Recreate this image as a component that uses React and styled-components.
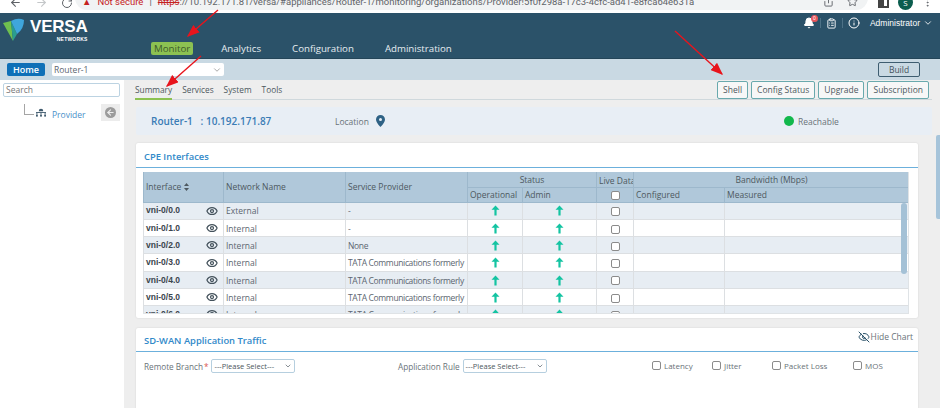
import styled, { createGlobalStyle } from "styled-components";
import { ChevronDown, Info, Bell, ClipboardList, Eye, EyeOff, ArrowLeft, ArrowRight, RotateCw, Star, Share, MoreVertical } from "lucide-react";

const GlobalStyle = createGlobalStyle`
  html, body {
    margin: 0;
    padding: 0;
    background: #ffffff;
  }
  * {
    box-sizing: border-box;
  }
`;

const Page = styled.div`
  position: relative;
  width: 940px;
  height: 408px;
  overflow: hidden;
  font-family: "Open Sans", "Liberation Sans", sans-serif;
  font-size: 9px;
  color: #5c6670;
  display: flex;
  flex-direction: column;
`;

/* browser chrome, cut off at the top of the shot */
const BrowserBar = styled.div`
  height: 13px;
  flex: none;
  display: flex;
  align-items: flex-start;
  background: #ffffff;
  overflow: hidden;
  color: #5f6368;
`;

const NavIcons = styled.div`
  width: 75px;
  flex: none;
  display: flex;
  gap: 13px;
  padding: 0 0 0 9px;
  margin-top: -4px;
  align-items: center;
  svg:nth-child(2) {
    color: #c4c7c9;
  }
`;

const UrlBar = styled.div`
  width: 793px;
  height: 24px;
  flex: none;
  margin-top: -14px;
  padding: 6px 10px 0 7px;
  border-radius: 0 0 12px 12px;
  background: #f1f3f4;
  display: flex;
  align-items: center;
  gap: 6px;
  font-family: Roboto, "Open Sans", sans-serif;
  font-size: 9.5px;
  white-space: nowrap;
`;

const Warn = styled.span`
  color: #c5221f;
`;

const Https = styled.span`
  color: #c5221f;
  text-decoration: line-through;
`;

const UrlActions = styled.div`
  margin-left: auto;
  display: flex;
  gap: 13px;
  align-items: center;
`;

const BrowserRight = styled.div`
  flex: 1;
  display: flex;
  align-items: center;
  gap: 9px;
  padding: 0 0 0 10px;
  margin-top: -5px;
  height: 15px;
`;

const Extension = styled.span`
  width: 11px;
  height: 11px;
  border: 2px solid #444;
  border-left-width: 6px;
`;

const Avatar = styled.span`
  width: 15px;
  height: 15px;
  border-radius: 50%;
  background: #0b5d4e;
  color: #fff;
  font-size: 8px;
  display: flex;
  align-items: center;
  justify-content: center;
`;

const Header = styled.header`
  height: 46px;
  flex: none;
  background: #2b5269;
  border-bottom: 1px solid #244558;
  display: flex;
  color: #ffffff;
`;

const Brand = styled.div`
  width: 151px;
  flex: none;
  display: flex;
  padding: 5px 0 0 3px;
  gap: 6px;
`;

const BrandText = styled.div`
  display: flex;
  flex-direction: column;
  align-items: flex-end;
  line-height: 1;
  height: 24px;
  font-family: "Liberation Sans", sans-serif;
  font-weight: 700;
  font-size: 17px;
  letter-spacing: -0.2px;
  small {
    font-size: 5px;
    letter-spacing: 0.2px;
    margin-top: 1.5px;
  }
`;

const MainNav = styled.nav`
  display: flex;
  align-items: flex-end;
  padding-bottom: 3px;
  font-size: 9.7px;
  color: #e6edf1;
`;

const NavItem = styled.span`
  height: 13px;
  line-height: 14px;
  padding: 0 3px;
  border-radius: 2px;
  margin-right: ${(p) => (p.$last ? 0 : 25)}px;
  background: ${(p) => (p.$active ? "#8cc152" : "transparent")};
  color: ${(p) => (p.$active ? "#3c5a2a" : "inherit")};
`;

const HeaderTools = styled.div`
  margin-left: auto;
  height: 20px;
  padding-right: 7px;
  display: flex;
  align-items: center;
  font-family: "Liberation Sans", sans-serif;
  font-size: 8.5px;
`;

const ToolSep = styled.span`
  width: 1px;
  height: 10px;
  margin: 0 5px;
  background: #4d7186;
`;

const BellWrap = styled.span`
  position: relative;
  display: flex;
`;

const BellCount = styled.span`
  position: absolute;
  top: -2px;
  right: -3px;
  width: 7px;
  height: 7px;
  border-radius: 50%;
  background: #e8575c;
  font-size: 5px;
  line-height: 7px;
  text-align: center;
`;

const AdminMenu = styled.span`
  display: flex;
  align-items: center;
  gap: 3px;
  margin-left: 10px;
`;

const SubBar = styled.div`
  height: 21px;
  flex: none;
  background: #c9d9e3;
  display: flex;
  align-items: center;
  padding: 0 20px 0 7px;
`;

const HomeButton = styled.span`
  width: 38px;
  height: 13px;
  line-height: 13px;
  text-align: center;
  border-radius: 2px;
  background: #0f70b7;
  color: #fff;
  font-weight: 600;
  font-size: 9px;
`;

const RouterSelect = styled.span`
  width: 172px;
  height: 13px;
  margin-left: 7px;
  padding: 0 2px;
  border-radius: 2px;
  background: #fff;
  display: flex;
  justify-content: space-between;
  align-items: center;
  line-height: 13px;
  font-size: 8.5px;
`;

const BuildButton = styled.span`
  margin-left: auto;
  width: 42px;
  height: 15px;
  line-height: 13px;
  text-align: center;
  border: 1px solid #3e5d70;
  border-radius: 2px;
  font-size: 8.5px;
  color: #44525c;
`;

const Body = styled.div`
  flex: 1;
  min-height: 0;
  display: flex;
`;

const Sidebar = styled.aside`
  width: 124px;
  flex: none;
  background: #fff;
  padding: 3px 4px 0 3px;
`;

const SearchBox = styled.div`
  height: 14px;
  line-height: 12px;
  padding-left: 2px;
  border: 1px solid #bcd3e2;
  border-radius: 2px;
  font-size: 8.5px;
  color: #777;
`;

const TreeRow = styled.div`
  display: flex;
  align-items: center;
  margin-top: 7px;
  padding-left: 21px;
  height: 17px;
  color: #4a90c9;
  font-size: 8.5px;
`;

const TreeLine = styled.span`
  width: 10px;
  height: 11px;
  border-left: 1px solid #a5a5a5;
  border-bottom: 1px solid #a5a5a5;
  margin: -7px 2px 0 0;
`;

const ProviderLabel = styled.span`
  margin-left: 6px;
  padding-top: 3px;
`;

const Collapse = styled.span`
  margin-left: auto;
  width: 19px;
  height: 17px;
  background: #ececec;
  display: flex;
  align-items: center;
  justify-content: center;
  svg {
    background: #9b9b9b;
    color: #ececec;
    border-radius: 50%;
    padding: 1px;
  }
`;

const Main = styled.main`
  flex: 1;
  min-width: 0;
  background: #eeeeee;
  padding: 0 8px 0 12px;
`;

const TabRow = styled.div`
  height: 20px;
  margin-left: -1px;
  display: flex;
  align-items: flex-start;
  border-bottom: 1px solid #cfd8dc;
  gap: 10px;
`;

const Tab = styled.span`
  height: 20px;
  line-height: 20px;
  font-size: 8.3px;
  color: #4d5860;
  border-bottom: ${(p) => (p.$active ? "2px solid #8cc152" : "none")};
`;

const ActionGroup = styled.div`
  margin-left: auto;
  padding: 1px 3px 0 0;
  display: flex;
  gap: 3px;
`;

const ActionButton = styled.span`
  height: 18px;
  line-height: 16px;
  padding: 0 5px;
  border: 1px solid #69a9ad;
  border-radius: 2px;
  background: #f7f7f7;
  font-size: 8.5px;
  color: #4d5860;
`;

const RouterPanel = styled.section`
  margin-top: 7px;
  height: 28px;
  background: #e8eef5;
  border-radius: 2px;
  display: flex;
  align-items: center;
  padding-left: 15px;
  font-size: 8.5px;
  color: #6a7379;
`;

const RouterName = styled.span`
  width: 184px;
  color: #3a7cb5;
  font-size: 10px;
  font-weight: 600;
  white-space: pre;
`;

const LocationLabel = styled.span`
  display: flex;
  align-items: center;
  gap: 7px;
  width: 449px;
`;

const ReachDot = styled.span`
  width: 10px;
  height: 10px;
  border-radius: 50%;
  background: #12b84c;
  margin-right: 4px;
`;

const Card = styled.section`
  width: 782px;
  margin-top: ${(p) => p.$top}px;
  height: ${(p) => p.$height}px;
  background: #fff;
  border-radius: 2px;
  box-shadow: 0 0 2px rgba(0, 0, 0, 0.12);
  overflow: hidden;
`;

const CardHead = styled.div`
  height: ${(p) => p.$height}px;
  border-bottom: 1px solid #6cb0dc;
  padding: 2px 0 0 8px;
  display: flex;
  align-items: center;
  justify-content: space-between;
  color: #3189c9;
  font-size: 9.4px;
  font-weight: 600;
`;

const HideChart = styled.span`
  display: flex;
  align-items: center;
  gap: 1px;
  padding: 0 5px 8px 0;
  font-size: 8.5px;
  font-weight: 400;
  color: #6a7379;
`;

const TableWrap = styled.div`
  position: relative;
  margin: 4px 0 0 7px;
  width: 766px;
  height: 142px;
  overflow: hidden;
  border-right: 1px solid #dfe3e6;
  border-bottom: 1px solid #dfe3e6;
`;

const Table = styled.table`
  width: 766px;
  table-layout: fixed;
  border-collapse: collapse;
  font-size: 8.5px;
`;

const Th = styled.th`
  background: #b0c8da;
  border: 1px solid #9db8cc;
  border-top: none;
  font-weight: 400;
  color: #4d5860;
  text-align: ${(p) => p.$align || "left"};
  padding: ${(p) => (p.$low ? "3px" : "0")} 2px 0;
  height: 15px;
  white-space: nowrap;
  overflow: hidden;
`;

const Row = styled.tr`
  height: 17.3px;
  background: ${(p) => (p.$odd ? "#e7edf3" : "#fff")};
`;

const Td = styled.td`
  border: 1px solid #dcdfe2;
  border-top: 1px solid #d5d8db;
  padding: 2px 2px 0;
  color: #5c6670;
  white-space: nowrap;
  overflow: hidden;
  text-align: ${(p) => (p.$center ? "center" : "left")};
  letter-spacing: ${(p) => (p.$tight ? "-0.35px" : "0")};
  line-height: 1;
`;

const InterfaceCell = styled.div`
  display: flex;
  justify-content: space-between;
  align-items: center;
  padding-right: 3px;
  margin-top: -2px;
  font-family: "Liberation Sans", sans-serif;
  font-weight: 700;
  color: #3a444c;
`;

const HeaderLabel = styled.span`
  display: inline-flex;
  align-items: center;
  gap: 3px;
`;

const Check = styled.span`
  display: inline-block;
  vertical-align: middle;
  width: 9px;
  height: 9px;
  border: 1px solid #8b8b8b;
  border-radius: 2px;
  background: #fff;
  flex: none;
`;

const TableScroll = styled.span`
  position: absolute;
  top: 31px;
  right: 1px;
  width: 6px;
  height: 71px;
  border-radius: 3px;
  background: #a4c1d6;
`;

const PageScroll = styled.span`
  position: absolute;
  top: 135px;
  right: 0;
  width: 4px;
  height: 84px;
  border-radius: 2px 0 0 2px;
  background: #a6c4da;
`;

const FilterRow = styled.div`
  display: flex;
  align-items: flex-start;
  padding: 7px 0 0 8px;
  font-size: 8.2px;
  color: #6a7379;
`;

const FilterField = styled.label`
  display: flex;
  align-items: center;
  gap: 3px;
  width: ${(p) => p.$width}px;
`;

const Required = styled.span`
  color: #d9534f;
  margin-left: -2px;
`;

const MiniSelect = styled.span`
  width: 84px;
  height: 14px;
  padding: 0 2px;
  border: 1px solid #b6cfdf;
  border-radius: 2px;
  display: flex;
  align-items: center;
  justify-content: space-between;
  color: #4d5860;
  font-size: 7.5px;
`;

const CheckOption = styled.label`
  display: flex;
  align-items: center;
  gap: 3px;
  width: ${(p) => p.$width}px;
  margin-top: 1px;
  font-size: 8px;
`;

const Arrows = styled.svg`
  position: absolute;
  inset: 0;
  pointer-events: none;
`;

const NETWORK_ROWS = [
  ["vni-0/0.0", "External", "-"],
  ["vni-0/1.0", "Internal", "-"],
  ["vni-0/2.0", "Internal", "None"],
  ["vni-0/3.0", "Internal", "TATA Communications formerly"],
  ["vni-0/4.0", "Internal", "TATA Communications formerly"],
  ["vni-0/5.0", "Internal", "TATA Communications formerly"],
  ["vni-0/6.0", "Internal", "TATA Communications formerly"],
];

const COLUMN_WIDTHS = [80, 122, 122, 55, 74, 37, 91, 185];

const UpArrow = () => (
  <svg width="9" height="11" viewBox="0 0 9 11">
    <path d="M4.5 0.5 L8.5 4.8 H5.6 V10.5 H3.4 V4.8 H0.5 Z" fill="#14c4a2" />
  </svg>
);

const SortIcon = () => (
  <svg width="5" height="8" viewBox="0 0 5 8" fill="#4d5860">
    <path d="M2.5 0 L5 3 H0 Z" />
    <path d="M2.5 8 L5 5 H0 Z" />
  </svg>
);

const PinIcon = () => (
  <svg width="9" height="12" viewBox="0 0 9 12">
    <path
      fillRule="evenodd"
      d="M4.5 0 A4.5 4.5 0 0 1 9 4.5 C9 7.5 4.5 12 4.5 12 C4.5 12 0 7.5 0 4.5 A4.5 4.5 0 0 1 4.5 0 Z M4.5 3 A1.5 1.5 0 1 0 4.5 6 A1.5 1.5 0 1 0 4.5 3 Z"
      fill="#2f6285"
    />
  </svg>
);

const ProviderIcon = () => (
  <svg width="10" height="11" viewBox="0 0 11 11" fill="#3f5a6d">
    <path d="M3 4 A2.5 2.5 0 0 1 8 4 Z" />
    <rect x="0" y="5" width="11" height="1" />
    <rect x="0.5" y="6" width="1" height="2" />
    <rect x="5" y="6" width="1" height="2" />
    <rect x="9.5" y="6" width="1" height="2" />
    <rect x="0" y="8" width="2" height="2" />
    <rect x="4.5" y="8" width="2" height="2" />
    <rect x="9" y="8" width="2" height="2" />
  </svg>
);

const VersaLogo = () => (
  <svg width="21" height="23" viewBox="0 0 21 23">
    <path d="M0 5 L8 3 L10 23 Z" fill="#6fc04f" />
    <path d="M8 3 L10 23 L14 16 Z" fill="#2a9d8f" />
    <path d="M8 3 Q15 -1 21 2 Q21 11 14 16 Z" fill="#3fa6dc" />
  </svg>
);

const App = () => {
  return (
    <>
      <GlobalStyle />
      <Page>
        <BrowserBar>
          <NavIcons>
            <ArrowLeft size={13} />
            <ArrowRight size={13} />
            <RotateCw size={12} />
          </NavIcons>
          <UrlBar>
            <Warn>▲</Warn>
            <Warn>Not secure</Warn>
            <span>|</span>
            <span>
              <Https>https</Https>://10.192.171.81/versa/#appliances/Router-1/monitoring/organizations/Provider!5f0f298a-17c3-4cfc-ad41-e8fca64e631a
            </span>
            <UrlActions>
              <Share size={11} />
              <Star size={11} />
            </UrlActions>
          </UrlBar>
          <BrowserRight>
            <Extension />
            <Avatar>S</Avatar>
            <MoreVertical size={11} />
          </BrowserRight>
        </BrowserBar>

        <Header>
          <Brand>
            <VersaLogo />
            <BrandText>
              VERSA
              <small>NETWORKS</small>
            </BrandText>
          </Brand>
          <MainNav>
            <NavItem $active>Monitor</NavItem>
            <NavItem>Analytics</NavItem>
            <NavItem>Configuration</NavItem>
            <NavItem $last>Administration</NavItem>
          </MainNav>
          <HeaderTools>
            <BellWrap>
              <Bell size={12} fill="#fff" />
              <BellCount>0</BellCount>
            </BellWrap>
            <ToolSep />
            <ClipboardList size={11} />
            <ToolSep />
            <Info size={12} />
            <AdminMenu>
              Administrator
              <ChevronDown size={10} />
            </AdminMenu>
          </HeaderTools>
        </Header>

        <SubBar>
          <HomeButton>Home</HomeButton>
          <RouterSelect>
            Router-1
            <ChevronDown size={10} color="#999" />
          </RouterSelect>
          <BuildButton>Build</BuildButton>
        </SubBar>

        <Body>
          <Sidebar>
            <SearchBox>Search</SearchBox>
            <TreeRow>
              <TreeLine />
              <ProviderIcon />
              <ProviderLabel>Provider</ProviderLabel>
              <Collapse>
                <ArrowLeft size={11} strokeWidth={3} />
              </Collapse>
            </TreeRow>
          </Sidebar>

          <Main>
            <TabRow>
              <Tab $active>Summary</Tab>
              <Tab>Services</Tab>
              <Tab>System</Tab>
              <Tab>Tools</Tab>
              <ActionGroup>
                <ActionButton>Shell</ActionButton>
                <ActionButton>Config Status</ActionButton>
                <ActionButton>Upgrade</ActionButton>
                <ActionButton>Subscription</ActionButton>
              </ActionGroup>
            </TabRow>

            <RouterPanel>
              <RouterName>Router-1   : 10.192.171.87</RouterName>
              <LocationLabel>
                Location
                <PinIcon />
              </LocationLabel>
              <ReachDot />
              Reachable
            </RouterPanel>

            <Card $top={8} $height={175}>
              <CardHead $height={25}>CPE Interfaces</CardHead>
              <TableWrap>
                <Table>
                  <colgroup>
                    {COLUMN_WIDTHS.map((width, index) => (
                      <col key={index} style={{ width }} />
                    ))}
                  </colgroup>
                  <thead>
                    <tr>
                      <Th rowSpan={2}>
                        <HeaderLabel>
                          Interface
                          <SortIcon />
                        </HeaderLabel>
                      </Th>
                      <Th rowSpan={2}>Network Name</Th>
                      <Th rowSpan={2}>Service Provider</Th>
                      <Th colSpan={2} $align="center">Status</Th>
                      <Th $low>Live Data</Th>
                      <Th colSpan={2} $align="center">Bandwidth (Mbps)</Th>
                    </tr>
                    <tr>
                      <Th>Operational</Th>
                      <Th>Admin</Th>
                      <Th $align="center"><Check /></Th>
                      <Th>Configured</Th>
                      <Th>Measured</Th>
                    </tr>
                  </thead>
                  <tbody>
                    {NETWORK_ROWS.map(([name, network, provider], index) => (
                      <Row key={name} $odd={index % 2 === 0}>
                        <Td>
                          <InterfaceCell>
                            {name}
                            <Eye size={12} color="#44525c" strokeWidth={2.5} />
                          </InterfaceCell>
                        </Td>
                        <Td>{network}</Td>
                        <Td $tight>{provider}</Td>
                        <Td $center><UpArrow /></Td>
                        <Td $center><UpArrow /></Td>
                        <Td $center><Check /></Td>
                        <Td />
                        <Td />
                      </Row>
                    ))}
                  </tbody>
                </Table>
                <TableScroll />
              </TableWrap>
            </Card>

            <Card $top={10} $height={100}>
              <CardHead $height={24}>
                SD-WAN Application Traffic
                <HideChart>
                  <EyeOff size={12} color="#2b5269" />
                  Hide Chart
                </HideChart>
              </CardHead>
              <FilterRow>
                <FilterField $width={254}>
                  Remote Branch<Required>*</Required>
                  <MiniSelect>---Please Select---<ChevronDown size={8} /></MiniSelect>
                </FilterField>
                <FilterField $width={254}>
                  Application Rule
                  <MiniSelect>---Please Select---<ChevronDown size={8} /></MiniSelect>
                </FilterField>
                <CheckOption $width={60}><Check />Latency</CheckOption>
                <CheckOption $width={60}><Check />Jitter</CheckOption>
                <CheckOption $width={81}><Check />Packet Loss</CheckOption>
                <CheckOption $width={40}><Check />MOS</CheckOption>
              </FilterRow>
            </Card>
          </Main>
        </Body>

        <PageScroll />

        {/* red annotation arrows drawn over the shot */}
        <Arrows width="940" height="408" viewBox="0 0 940 408">
          <defs>
            <marker id="tip" markerWidth="9" markerHeight="7" refX="8" refY="3.5" orient="auto">
              <path d="M0 0 L9 3.5 L0 7 Z" fill="#e8141c" />
            </marker>
          </defs>
          <g stroke="#e8141c" strokeWidth="1.4" fill="none">
            <line x1="218" y1="10" x2="188" y2="36" markerEnd="url(#tip)" />
            <line x1="201" y1="56" x2="167" y2="86" markerEnd="url(#tip)" />
            <line x1="675" y1="31" x2="722" y2="74" markerEnd="url(#tip)" />
          </g>
        </Arrows>
      </Page>
    </>
  );
};

export default App;
